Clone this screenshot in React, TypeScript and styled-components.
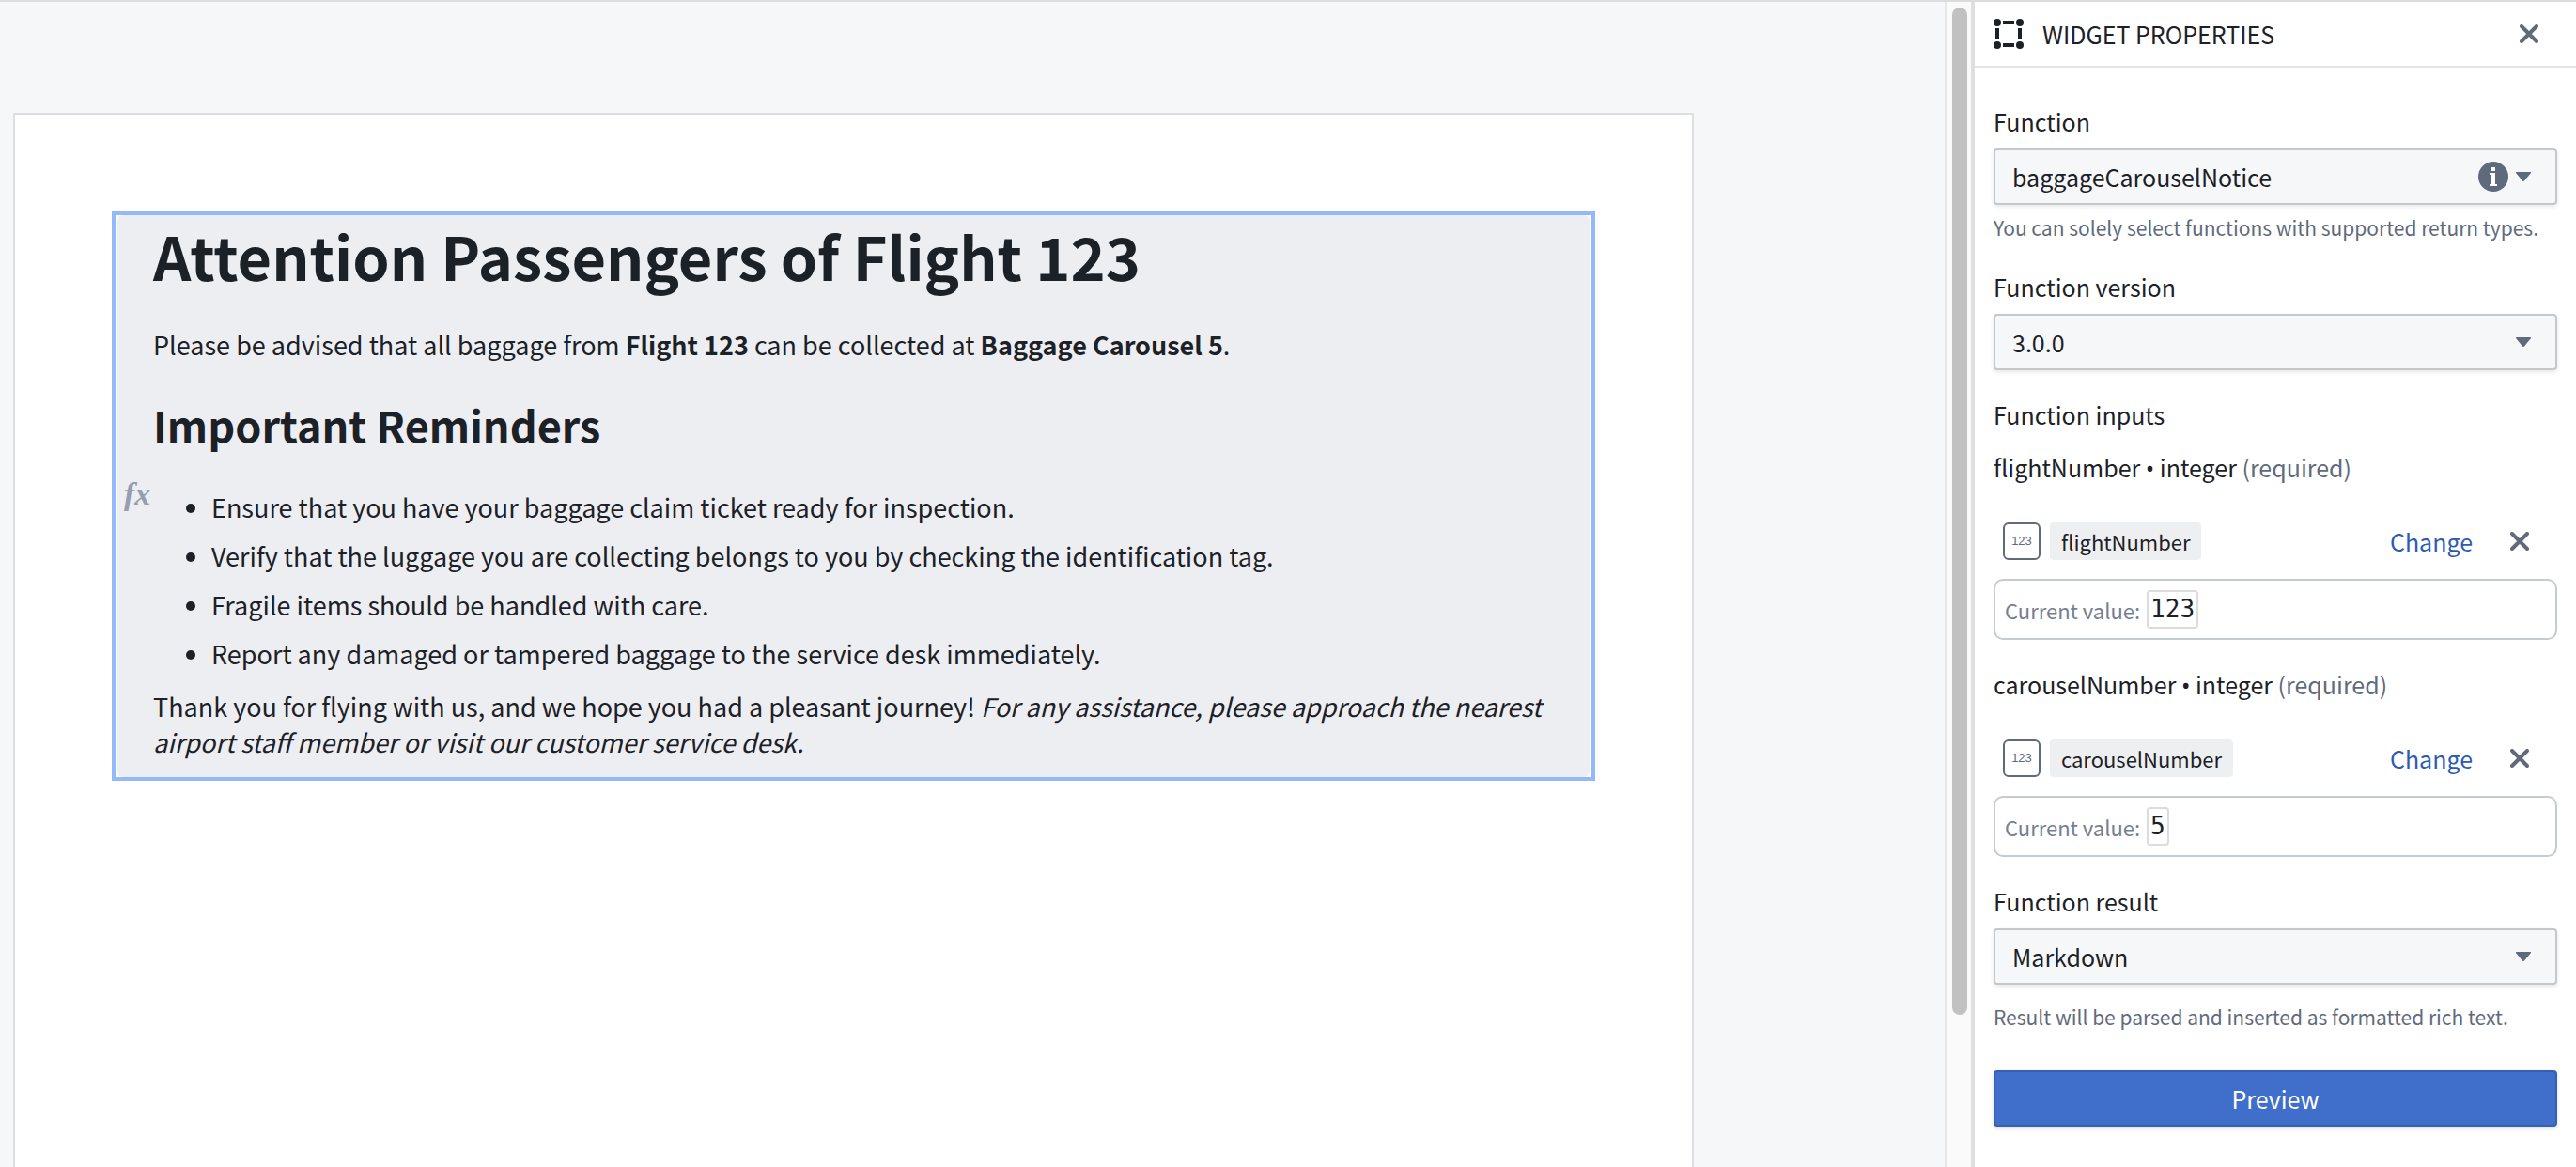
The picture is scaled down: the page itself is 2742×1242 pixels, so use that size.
import React from "react";
import styled, { createGlobalStyle } from "styled-components";

const color = {
  ink: "#1c2127",
  muted: "#5f6b7c",
  faint: "#738091",
  canvas: "#f6f7f9",
  line: "#dcdee1",
  link: "#2d5bb3",
  select: "#c5c8cb",
};

const GlobalStyle = createGlobalStyle`
  * { box-sizing: border-box; }
  body {
    margin: 0;
    background: ${color.canvas};
    color: ${color.ink};
    font-family: "Noto Sans CJK SC", "Noto Sans", sans-serif;
    font-size: 25px;
    line-height: 36px;
  }
  button, select { font: inherit; color: inherit; margin: 0; }
  h1, h2, p, ul { margin: 0; }
`;

const Shell = styled.div`
  display: flex;
  min-height: 100vh;
  border-top: 2px solid #dcdcdc;
`;

const Canvas = styled.main`
  flex: 1;
  min-width: 0;
  display: flex;
  padding: 118px 267px 0 14px;
`;

const Page = styled.article`
  flex: 1;
  min-width: 0;
  padding: 103px;
  background: #fff;
  border: 2px solid ${color.line};
  border-bottom: 0;
`;

const Widget = styled.section`
  padding: 0 2px;
  border: 4px solid #93b8fc;
`;

const WidgetBody = styled.div`
  display: flex;
  align-items: center;
  padding: 0 28px 0 7px;
  background: #edeef2;
  border-radius: 6px;
`;

const FxMark = styled.span`
  flex: none;
  width: 31px;
  padding-bottom: 4px;
  color: #949eae;
  font: italic bold 34px/40px "Liberation Serif", serif;
`;

const RichText = styled.div`
  flex: 1;
  min-width: 0;
  padding-bottom: 18px;
  font-size: 27px;
  line-height: 38px;
`;

const Title = styled.h1`
  font-size: 63px;
  line-height: 86px;
  font-weight: 700;
`;

const Subtitle = styled.h2`
  margin: 36px 0 39px;
  font-size: 45px;
  line-height: 60px;
  font-weight: 700;
`;

const Lead = styled.p`
  margin-top: 33px;
`;

const Reminders = styled.ul`
  display: flex;
  flex-direction: column;
  gap: 14px;
  margin-bottom: 18px;
  padding-left: 62px;
`;

const ScrollTrack = styled.div`
  flex: none;
  width: 32px;
  padding: 6px;
  background: #fafafa;
  border-left: 2px solid #e7e7e7;
  border-right: 4px solid #dfdfdf;
`;

const ScrollThumb = styled.div`
  width: 16px;
  height: calc(100vh - 170px);
  margin: 0 auto;
  background: #c1c1c1;
  border-radius: 8px;
`;

const Panel = styled.aside`
  flex: none;
  width: 640px;
  background: #fff;
`;

const PanelHeader = styled.header`
  display: flex;
  align-items: center;
  gap: 20px;
  height: 70px;
  padding: 0 30px 0 20px;
  border-bottom: 2px solid #e5e6ea;
`;

const PanelTitle = styled.span`
  flex: 1;
`;

const Form = styled.form`
  display: flex;
  flex-direction: column;
  gap: 29px;
  padding: 39px 20px;
`;

const Field = styled.div`
  display: flex;
  flex-direction: column;
`;

const Label = styled.label`
  margin-bottom: 11px;
`;

const Helper = styled.span<{ $gap: number }>`
  margin-top: ${(p) => p.$gap}px;
  color: ${color.muted};
  font-size: 21px;
  line-height: 32px;
`;

const SelectBox = styled.div`
  display: grid;
  align-items: center;
  > * { grid-area: 1 / 1; }
`;

const Select = styled.select`
  appearance: none;
  width: 100%;
  height: 60px;
  padding: 0 100px 0 18px;
  background: ${color.canvas};
  border: 2px solid ${color.select};
  border-radius: 4px;
  box-shadow: 0 2px 4px rgba(17, 20, 24, 0.1);
`;

const SelectIcons = styled.span`
  display: flex;
  align-items: center;
  justify-self: end;
  gap: 8px;
  padding-right: 28px;
  color: ${color.muted};
  pointer-events: none;
`;

const Inputs = styled.section`
  display: flex;
  flex-direction: column;
  gap: 20px;
`;

const InputList = styled.div`
  display: flex;
  flex-direction: column;
  gap: 29px;
`;

const InputSlot = styled.div`
  display: flex;
  flex-direction: column;
`;

const Bullet = styled.span`
  font-family: "Noto Sans", sans-serif;
  line-height: 1;
`;

const Required = styled.span`
  color: ${color.muted};
`;

const VariableRow = styled.div`
  display: flex;
  align-items: center;
  gap: 10px;
  height: 40px;
  margin: 41px 0 20px;
  padding: 0 20px 0 10px;
`;

const TypeBadge = styled.span`
  display: grid;
  place-items: center;
  width: 40px;
  height: 40px;
  color: ${color.muted};
  border: 2px solid ${color.muted};
  border-radius: 6px;
  font: 13px/16px "Liberation Sans", sans-serif;
`;

const Tag = styled.span`
  padding: 0 12px;
  background: #eeeff1;
  border-radius: 4px;
  font-size: 22px;
  line-height: 40px;
`;

const LinkButton = styled.button`
  margin-left: auto;
  margin-right: 20px;
  padding: 0;
  color: ${color.link};
  background: none;
  border: 0;
`;

const IconButton = styled.button`
  display: grid;
  place-items: center;
  width: 40px;
  height: 40px;
  padding: 0;
  color: ${color.muted};
  background: none;
  border: 0;
`;

const CurrentValue = styled.div`
  display: flex;
  align-items: center;
  gap: 7px;
  height: 65px;
  padding: 0 10px;
  color: ${color.faint};
  border: 2px solid #c5cbd3;
  border-radius: 10px;
  font-size: 22px;
`;

const Value = styled.output`
  padding: 0 2px;
  color: ${color.ink};
  border: 2px solid #dcdcdc;
  border-radius: 4px;
  font: 26px/37px "DejaVu Sans Mono", monospace;
`;

const PreviewButton = styled.button`
  height: 60px;
  margin-top: 12px;
  color: #fff;
  background: #3f6fcb;
  border: 2px solid #3561b0;
  border-radius: 4px;
  box-shadow: 0 2px 4px rgba(17, 20, 24, 0.14);
`;

const SelectionIcon = () => (
  <svg width="32" height="32" viewBox="0 0 32 32" fill={color.ink} aria-hidden="true">
    <circle cx="4" cy="4" r="4" />
    <circle cx="28" cy="4" r="4" />
    <circle cx="4" cy="28" r="4" />
    <circle cx="28" cy="28" r="4" />
    <path d="M10 2h12v4H10zM10 26h12v4H10zM2 10h4v12H2zM26 10h4v12h-4z" />
  </svg>
);

const CrossIcon = () => (
  <svg width="20" height="20" viewBox="0 0 20 20" aria-hidden="true">
    <path d="M2 2l16 16M18 2L2 18" fill="none" stroke="currentColor" strokeWidth="4" strokeLinecap="round" />
  </svg>
);

const CaretIcon = () => (
  <svg width="16" height="10" viewBox="0 0 16 10" aria-hidden="true">
    <path d="M1 0h14q2 0 .6 1.6L9 9.4q-1 1.2-2 0L.4 1.6Q-1 0 1 0z" fill="currentColor" />
  </svg>
);

const InfoIcon = () => (
  <svg width="32" height="32" viewBox="0 0 32 32" aria-hidden="true">
    <circle cx="16" cy="16" r="16" fill="currentColor" />
    <path d="M14 6h4v4h-4zM12 12h6v12h2v2h-8v-2h2V14h-2z" fill="#fff" />
  </svg>
);

type SelectFieldProps = {
  id: string;
  label: string;
  value: string;
  helper?: string;
  helperGap?: number;
  info?: boolean;
};

const SelectField = ({ id, label, value, helper, helperGap = 8, info }: SelectFieldProps) => (
  <Field>
    <Label htmlFor={id}>{label}</Label>
    <SelectBox>
      <Select id={id} defaultValue={value}>
        <option>{value}</option>
      </Select>
      <SelectIcons>
        {info && <InfoIcon />}
        <CaretIcon />
      </SelectIcons>
    </SelectBox>
    {helper && <Helper $gap={helperGap}>{helper}</Helper>}
  </Field>
);

const FunctionInput = ({ name, value }: { name: string; value: string }) => (
  <InputSlot>
    <span>
      {name} <Bullet>•</Bullet> integer <Required>(required)</Required>
    </span>
    <VariableRow>
      <TypeBadge>123</TypeBadge>
      <Tag>{name}</Tag>
      <LinkButton type="button">Change</LinkButton>
      <IconButton type="button" aria-label={`Remove ${name}`}>
        <CrossIcon />
      </IconButton>
    </VariableRow>
    <CurrentValue>
      Current value: <Value>{value}</Value>
    </CurrentValue>
  </InputSlot>
);

const reminders = [
  "Ensure that you have your baggage claim ticket ready for inspection.",
  "Verify that the luggage you are collecting belongs to you by checking the identification tag.",
  "Fragile items should be handled with care.",
  "Report any damaged or tampered baggage to the service desk immediately.",
];

export default function App() {
  return (
    <>
      <GlobalStyle />
      <Shell>
        <Canvas>
          <Page>
            <Widget>
              <WidgetBody>
                <FxMark>fx</FxMark>
                <RichText>
                  <Title>Attention Passengers of Flight 123</Title>
                  <Lead>
                    Please be advised that all baggage from <strong>Flight 123</strong> can be collected at{" "}
                    <strong>Baggage Carousel 5</strong>.
                  </Lead>
                  <Subtitle>Important Reminders</Subtitle>
                  <Reminders>
                    {reminders.map((text) => (
                      <li key={text}>{text}</li>
                    ))}
                  </Reminders>
                  <p>
                    Thank you for flying with us, and we hope you had a pleasant journey!{" "}
                    <em>
                      For any assistance, please approach the nearest airport staff member or visit our customer
                      service desk.
                    </em>
                  </p>
                </RichText>
              </WidgetBody>
            </Widget>
          </Page>
        </Canvas>
        <ScrollTrack>
          <ScrollThumb />
        </ScrollTrack>
        <Panel>
          <PanelHeader>
            <SelectionIcon />
            <PanelTitle>WIDGET PROPERTIES</PanelTitle>
            <IconButton type="button" aria-label="Close">
              <CrossIcon />
            </IconButton>
          </PanelHeader>
          <Form>
            <SelectField
              id="function"
              label="Function"
              value="baggageCarouselNotice"
              helper="You can solely select functions with supported return types."
              info
            />
            <SelectField id="version" label="Function version" value="3.0.0" />
            <Inputs>
              <span>Function inputs</span>
              <InputList>
                <FunctionInput name="flightNumber" value="123" />
                <FunctionInput name="carouselNumber" value="5" />
              </InputList>
            </Inputs>
            <SelectField
              id="result"
              label="Function result"
              value="Markdown"
              helper="Result will be parsed and inserted as formatted rich text."
              helperGap={18}
            />
            <PreviewButton type="button">Preview</PreviewButton>
          </Form>
        </Panel>
      </Shell>
    </>
  );
}
